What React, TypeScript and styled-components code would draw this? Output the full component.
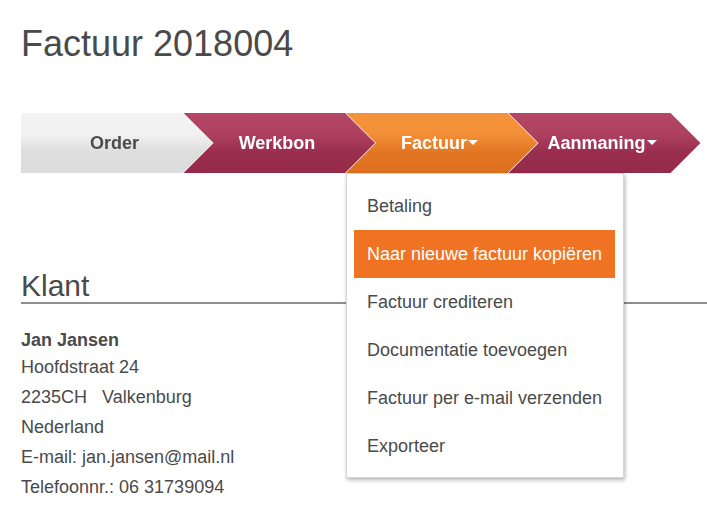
import React from "react";
import styled, { createGlobalStyle, css } from "styled-components";

const GlobalStyle = createGlobalStyle`
  html, body {
    margin: 0;
    padding: 0;
    background: #ffffff;
  }
  body {
    font-family: "Liberation Sans", Arial, sans-serif;
    color: #4a4a4a;
    overflow: hidden;
  }
`;

const Page = styled.div`
  padding: 26px 0 0 21px;
  width: 686px;
`;

const Title = styled.h1`
  margin: 0;
  font-size: 36px;
  line-height: 36px;
  font-weight: 400;
  color: #4a4a4a;
`;

const Steps = styled.div`
  display: flex;
  margin-top: 51px;
  height: 60px;
  position: relative;
  z-index: 2;
`;

type Variant = "grey" | "wine" | "orange";

const StepItem = styled.div<{ $first?: boolean }>`
  position: relative;
  width: 192px;
  height: 60px;
  flex: none;
  margin-left: ${(p) => (p.$first ? "0" : "-29.5px")};
`;

const ShapeWrap = styled.div`
  width: 100%;
  height: 100%;
  filter: drop-shadow(-1px 0 0 rgba(255, 255, 255, 0.75));
`;

const gradients: Record<Variant, string> = {
  grey: "linear-gradient(#f3f3f3 0%, #f1f1f1 35%, #dedede 65%, #dcdcdc 100%)",
  wine: "linear-gradient(#b34765 0%, #ae4160 35%, #9a2e4e 65%, #952a4a 100%)",
  orange: "linear-gradient(#f5933b 0%, #f38f37 35%, #e37622 65%, #de701f 100%)",
};

const Shape = styled.div<{ $variant: Variant; $first?: boolean }>`
  width: 100%;
  height: 100%;
  display: flex;
  align-items: center;
  justify-content: center;
  box-sizing: border-box;
  padding-right: 5px;
  background: ${(p) => gradients[p.$variant]};
  color: ${(p) => (p.$variant === "grey" ? "#4a4a4a" : "#ffffff")};
  font-size: 18px;
  font-weight: 700;
  ${(p) =>
    p.$first
      ? css`
          clip-path: polygon(0 0, calc(100% - 30px) 0, 100% 50%, calc(100% - 30px) 100%, 0 100%);
        `
      : css`
          clip-path: polygon(0 0, calc(100% - 30px) 0, 100% 50%, calc(100% - 30px) 100%, 0 100%, 30px 50%);
        `}
`;

const Caret = styled.span`
  display: inline-block;
  width: 0;
  height: 0;
  border-left: 5px solid transparent;
  border-right: 5px solid transparent;
  border-top: 5px solid #ffffff;
  margin-left: 1px;
  position: relative;
  top: -1px;
`;

const Menu = styled.ul`
  position: absolute;
  top: 100%;
  left: 0;
  width: 278px;
  box-sizing: border-box;
  margin: 0;
  padding: 8px 8px 7px 7px;
  list-style: none;
  background: #ffffff;
  border: 1px solid #d4d4d4;
  box-shadow: 1px 2px 4px rgba(0, 0, 0, 0.3);
  z-index: 5;
`;

const MenuItem = styled.li<{ $active?: boolean }>`
  height: 48px;
  line-height: 48px;
  padding-left: 13px;
  font-size: 18px;
  white-space: nowrap;
  color: ${(p) => (p.$active ? "#ffffff" : "#4a4a4a")};
  background: ${(p) => (p.$active ? "#f07323" : "transparent")};
`;

const Section = styled.section`
  margin-top: 98px;
  width: 686px;
`;

const SectionTitle = styled.h2`
  margin: 0;
  font-size: 30px;
  line-height: 30px;
  font-weight: 400;
  color: #4a4a4a;
  padding-bottom: 1px;
  border-bottom: 2px solid #8e8e8e;
`;

const Name = styled.div`
  margin-top: 25px;
  font-size: 18px;
  line-height: 23px;
  font-weight: 700;
  color: #4a4a4a;
`;

const Line = styled.div`
  font-size: 18px;
  line-height: 30px;
  color: #4a4a4a;
  white-space: pre;
`;

const steps: { label: string; variant: Variant; caret?: boolean; menu?: boolean }[] = [
  { label: "Order", variant: "grey" },
  { label: "Werkbon", variant: "wine" },
  { label: "Factuur", variant: "orange", caret: true, menu: true },
  { label: "Aanmaning", variant: "wine", caret: true },
];

const menuItems = [
  "Betaling",
  "Naar nieuwe factuur kopiëren",
  "Factuur crediteren",
  "Documentatie toevoegen",
  "Factuur per e-mail verzenden",
  "Exporteer",
];

export default function App() {
  return (
    <>
      <GlobalStyle />
      <Page>
        <Title>Factuur 2018004</Title>
        <Steps>
          {steps.map((s, i) => (
            <StepItem key={s.label} $first={i === 0}>
              <ShapeWrap>
                <Shape $variant={s.variant} $first={i === 0}>
                  {s.label}
                  {s.caret && <Caret />}
                </Shape>
              </ShapeWrap>
              {s.menu && (
                <Menu>
                  {menuItems.map((m, j) => (
                    <MenuItem key={m} $active={j === 1}>
                      {m}
                    </MenuItem>
                  ))}
                </Menu>
              )}
            </StepItem>
          ))}
        </Steps>
        <Section>
          <SectionTitle>Klant</SectionTitle>
          <Name>Jan Jansen</Name>
          <Line>Hoofdstraat 24</Line>
          <Line>{"2235CH   Valkenburg"}</Line>
          <Line>Nederland</Line>
          <Line>E-mail: jan.jansen@mail.nl</Line>
          <Line>Telefoonnr.: 06 31739094</Line>
        </Section>
      </Page>
    </>
  );
}
